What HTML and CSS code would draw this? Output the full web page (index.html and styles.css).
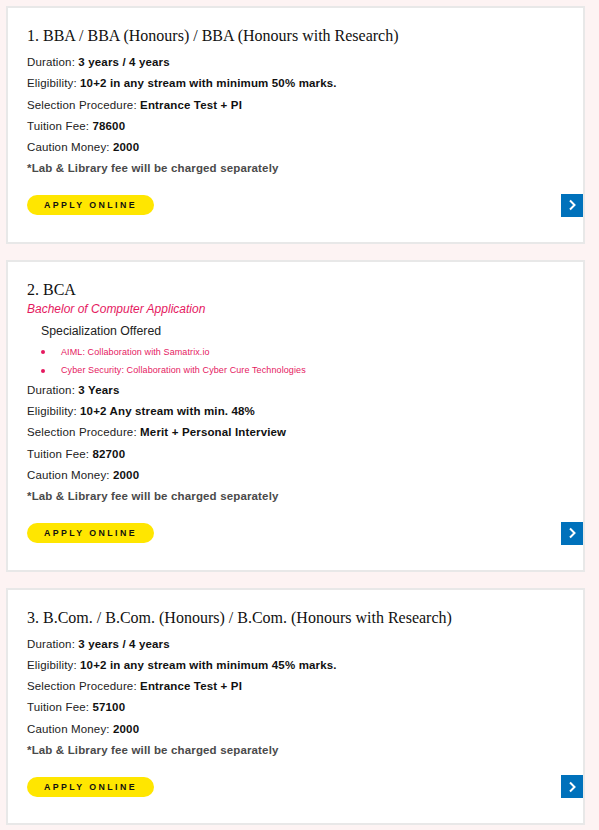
FILE: index.html
```html
<!DOCTYPE html>
<html lang="en">
<head>
<meta charset="utf-8">
<title>Programs</title>
<link rel="stylesheet" href="styles.css">
</head>
<body>
<div class="list">
  <div class="card">
    <h3 class="title">1. BBA / BBA (Honours) / BBA (Honours with Research)</h3>
    <p class="row">Duration: <b>3 years / 4 years</b></p>
    <p class="row">Eligibility: <b>10+2 in any stream with minimum 50% marks.</b></p>
    <p class="row">Selection Procedure: <b>Entrance Test + PI</b></p>
    <p class="row">Tuition Fee: <b>78600</b></p>
    <p class="row">Caution Money: <b>2000</b></p>
    <p class="row note">*Lab &amp; Library fee will be charged separately</p>
    <div class="foot">
      <a class="apply" href="#">APPLY ONLINE</a>
      <a class="arrow" href="#"><svg width="10" height="12" viewBox="0 0 10 12"><path d="M3 1.5 L7.5 6 L3 10.5" fill="none" stroke="#fff" stroke-width="2"/></svg></a>
    </div>
  </div>

  <div class="card">
    <h3 class="title">2. BCA</h3>
    <p class="sub">Bachelor of Computer Application</p>
    <p class="spec">Specialization Offered</p>
    <ul class="bullets">
      <li>AIML: Collaboration with Samatrix.io</li>
      <li>Cyber Security: Collaboration with Cyber Cure Technologies</li>
    </ul>
    <p class="row">Duration: <b>3 Years</b></p>
    <p class="row">Eligibility: <b>10+2 Any stream with min. 48%</b></p>
    <p class="row">Selection Procedure: <b>Merit + Personal Interview</b></p>
    <p class="row">Tuition Fee: <b>82700</b></p>
    <p class="row">Caution Money: <b>2000</b></p>
    <p class="row note">*Lab &amp; Library fee will be charged separately</p>
    <div class="foot">
      <a class="apply" href="#">APPLY ONLINE</a>
      <a class="arrow" href="#"><svg width="10" height="12" viewBox="0 0 10 12"><path d="M3 1.5 L7.5 6 L3 10.5" fill="none" stroke="#fff" stroke-width="2"/></svg></a>
    </div>
  </div>

  <div class="card">
    <h3 class="title">3. B.Com. / B.Com. (Honours) / B.Com. (Honours with Research)</h3>
    <p class="row">Duration: <b>3 years / 4 years</b></p>
    <p class="row">Eligibility: <b>10+2 in any stream with minimum 45% marks.</b></p>
    <p class="row">Selection Procedure: <b>Entrance Test + PI</b></p>
    <p class="row">Tuition Fee: <b>57100</b></p>
    <p class="row">Caution Money: <b>2000</b></p>
    <p class="row note">*Lab &amp; Library fee will be charged separately</p>
    <div class="foot">
      <a class="apply" href="#">APPLY ONLINE</a>
      <a class="arrow" href="#"><svg width="10" height="12" viewBox="0 0 10 12"><path d="M3 1.5 L7.5 6 L3 10.5" fill="none" stroke="#fff" stroke-width="2"/></svg></a>
    </div>
  </div>
</div>
</body>
</html>
```

FILE: styles.css
```css
html, body {
  margin: 0;
  padding: 0;
  background: #fdf3f3;
}
body {
  font-family: "Liberation Sans", Arial, sans-serif;
  color: #222;
}
.list {
  display: flex;
  flex-direction: column;
  gap: 16px;
  padding: 6px 14px 0 6px;
}
.card {
  background: #fff;
  border: 2px solid #e8e8e8;
  padding: 18px 0 25px 19px;
}
.title {
  margin: 0 0 6px;
  font-family: "Liberation Serif", "Times New Roman", serif;
  font-weight: normal;
  font-size: 16px;
  line-height: 20px;
  color: #111;
}
.row {
  margin: 0;
  font-size: 11.5px;
  letter-spacing: 0.15px;
  line-height: 21.3px;
  color: #222;
}
.row b {
  color: #111;
}
.note {
  font-weight: bold;
  color: #4a4a4a;
}
.sub {
  margin: -6px 0 0;
  font-size: 12px;
  line-height: 19px;
  font-style: italic;
  color: #e5195f;
}
.spec {
  margin: 2px 0 0 14px;
  font-size: 12.3px;
  line-height: 20px;
  color: #222;
}
.bullets {
  margin: 2px 0 0 0;
  padding: 0 0 0 34px;
  list-style: none;
}
.bullets li {
  position: relative;
  font-size: 9px;
  letter-spacing: 0.1px;
  line-height: 18.5px;
  color: #e5195f;
}
.bullets li::before {
  content: "";
  position: absolute;
  left: -20px;
  top: 7.5px;
  width: 4px;
  height: 4px;
  border-radius: 50%;
  background: #e5195f;
}
.foot {
  display: flex;
  justify-content: space-between;
  align-items: center;
  margin-top: 14px;
}
.apply {
  display: flex;
  align-items: center;
  justify-content: center;
  width: 127px;
  height: 20px;
  border-radius: 10px;
  background: #ffe600;
  color: #111;
  text-decoration: none;
  font-size: 8.8px;
  font-weight: bold;
  letter-spacing: 2.4px;
}
.arrow {
  display: flex;
  align-items: center;
  justify-content: center;
  width: 22px;
  height: 23px;
  background: #0071bb;
}
```
